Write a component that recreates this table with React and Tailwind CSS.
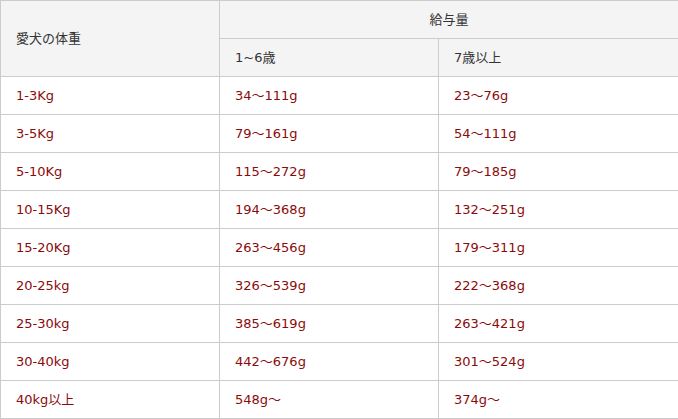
const rows = [
  ['1-3Kg', '34～111g', '23～76g'],
  ['3-5Kg', '79～161g', '54～111g'],
  ['5-10Kg', '115～272g', '79～185g'],
  ['10-15Kg', '194～368g', '132～251g'],
  ['15-20Kg', '263～456g', '179～311g'],
  ['20-25kg', '326～539g', '222～368g'],
  ['25-30kg', '385～619g', '263～421g'],
  ['30-40kg', '442～676g', '301～524g'],
  ['40kg以上', '548g～', '374g～'],
];

export default function App() {
  return (
    <div className="w-[678px] bg-white font-['DejaVu_Sans','Noto_Sans_CJK_JP',sans-serif] text-[13px] leading-none">
      <table className="w-[678px] table-fixed border-collapse">
        <colgroup>
          <col className="w-[219px]" />
          <col className="w-[219px]" />
          <col className="w-[240px]" />
        </colgroup>
        <thead>
          <tr className="h-[38px]">
            <th rowSpan={2} className="border border-[#ccc] bg-[#f4f4f4] pl-[15px] text-left font-normal text-[#333]">
              愛犬の体重
            </th>
            <th colSpan={2} className="border border-[#ccc] bg-[#f4f4f4] text-center font-normal text-[#333]">
              給与量
            </th>
          </tr>
          <tr className="h-[38px]">
            <th className="border border-[#ccc] bg-[#f4f4f4] pl-[15px] text-left font-normal text-[#333]">1~6歳</th>
            <th className="border border-[#ccc] bg-[#f4f4f4] pl-[15px] text-left font-normal text-[#333]">7歳以上</th>
          </tr>
        </thead>
        <tbody>
          {rows.map(r => (
            <tr key={r[0]} className="h-[38px]">
              {r.map((c, i) => (
                <td key={i} className="border border-[#ccc] pl-[15px] text-[#8b0a0a]">{c}</td>
              ))}
            </tr>
          ))}
        </tbody>
      </table>
    </div>
  );
}
